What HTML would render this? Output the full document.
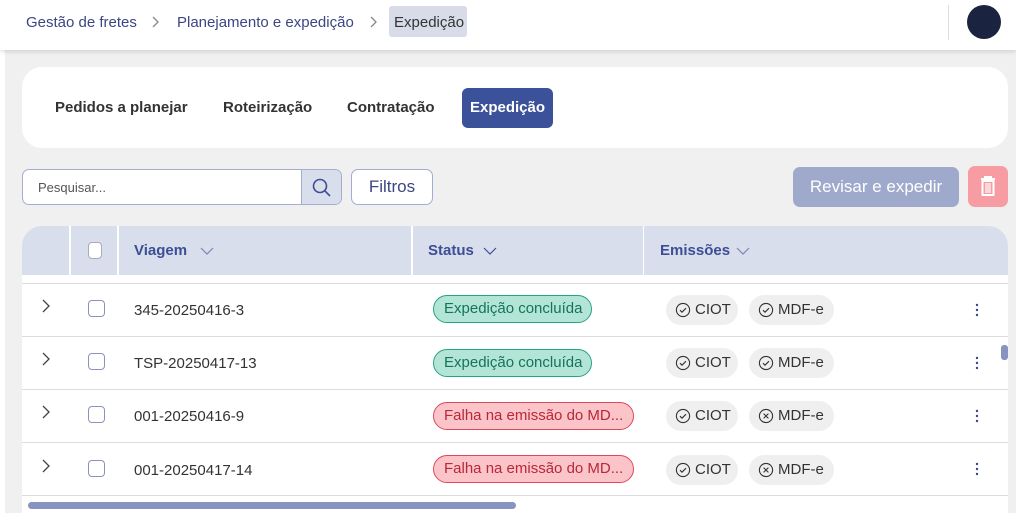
<!DOCTYPE html>
<html><head><meta charset="utf-8"><style>
*{box-sizing:border-box;margin:0;padding:0}
body{width:1016px;height:513px;overflow:hidden;background:#fff;font-family:"Liberation Sans",sans-serif;position:relative;color:#333}
.abs{position:absolute}
.hdr{left:0;top:0;width:1016px;height:50px;background:#fff;box-shadow:0 2px 4px rgba(0,0,0,.12);z-index:2}
.bc{top:14px;font-size:15px;color:#3b4682}
.main{left:5px;top:50px;width:1011px;height:463px;background:#f0f0f0}
.card{left:22px;top:67px;width:986px;height:81px;background:#fff;border-radius:20px}
.tab{top:99px;font-size:15px;font-weight:bold;color:#333}
.th{top:242px;font-size:15px;font-weight:bold;color:#3b4e96}
.cell{font-size:15px;color:#333}
.pill{height:28px;border-radius:14px;font-size:15px;padding:0 10px;line-height:26px;white-space:nowrap}
.g{background:#b3e5d6;border:1px solid #26a383;color:#13745a}
.r{background:#fbc4c9;border:1px solid #e0475a;color:#b8283a}
.chip{height:30px;border-radius:15px;background:#efefef;font-size:15px;line-height:30px;padding:0 0 0 9px;color:#333;display:flex;align-items:center;gap:4px;white-space:nowrap}
.chip svg{flex:none;width:16px;height:16px}
.cb{width:17px;height:17px;border:1px solid #8a93b8;border-radius:4px;background:#fff}
.line{left:22px;width:986px;height:1px;background:#dcdcdc}
</style></head><body>
<svg width="0" height="0" style="position:absolute"><defs>
<symbol id="ok" viewBox="0 0 16 16"><circle cx="8" cy="8" r="6.6" fill="none" stroke="#333" stroke-width="1.1"/><path d="M5 8.2l2 2 4-4" fill="none" stroke="#333" stroke-width="1.1"/></symbol>
<symbol id="no" viewBox="0 0 16 16"><circle cx="8" cy="8" r="6.6" fill="none" stroke="#333" stroke-width="1.1"/><path d="M5.6 5.6l4.8 4.8M10.4 5.6l-4.8 4.8" fill="none" stroke="#333" stroke-width="1.1"/></symbol>
<symbol id="ch" viewBox="0 0 12 16"><path d="M3 2l6 6-6 6" fill="none" stroke="#444" stroke-width="1.3"/></symbol>
<symbol id="dt" viewBox="0 0 4 14"><circle cx="2" cy="2" r="1.2" fill="#3b4682"/><circle cx="2" cy="7" r="1.2" fill="#3b4682"/><circle cx="2" cy="12" r="1.2" fill="#3b4682"/></symbol>
<symbol id="dn" viewBox="0 0 14 8"><path d="M1 1l6 6 6-6" fill="none" stroke="currentColor" stroke-width="1.2"/></symbol>
</defs></svg>
<div class="abs hdr">
 <div class="abs bc" style="left:26px">Gestão de fretes</div>
 <svg class="abs" style="left:151px;top:15px" width="10" height="14"><path d="M2 2l5 5-5 5" fill="none" stroke="#888" stroke-width="1.3"/></svg>
 <div class="abs bc" style="left:177px">Planejamento e expedição</div>
 <svg class="abs" style="left:369px;top:15px" width="10" height="14"><path d="M2 2l5 5-5 5" fill="none" stroke="#888" stroke-width="1.3"/></svg>
 <div class="abs" style="left:389px;top:6px;width:78px;height:31px;background:#d8dce9;border-radius:3px"></div>
 <div class="abs bc" style="left:394px;color:#333">Expedição</div>
 <div class="abs" style="left:948px;top:5px;width:1px;height:35px;background:#ddd"></div>
 <div class="abs" style="left:967px;top:5px;width:34px;height:34px;border-radius:50%;background:#1a2340"></div>
</div>
<div class="abs main"></div>
<div class="abs card"></div>
<div class="abs tab" style="left:55px">Pedidos a planejar</div>
<div class="abs tab" style="left:223px">Roteirização</div>
<div class="abs tab" style="left:347px">Contratação</div>
<div class="abs" style="left:462px;top:88px;width:91px;height:40px;background:#3b5199;border-radius:6px;color:#fff;font-size:15px;font-weight:bold;text-align:center;line-height:40px">Expedição</div>

<div class="abs" style="left:22px;top:169px;width:320px;height:36px;border:1px solid #a4acd0;border-radius:7px;background:#fff;overflow:hidden">
 <div class="abs" style="left:15px;top:10px;font-size:13px;color:#555">Pesquisar...</div>
 <div class="abs" style="left:278px;top:0;width:42px;height:36px;background:#d8deeb;border-left:1px solid #a4acd0"></div>
 <svg class="abs" style="left:288px;top:7px" width="22" height="22" viewBox="0 0 22 22"><circle cx="9" cy="9" r="6.5" fill="none" stroke="#3b4e96" stroke-width="1.6"/><path d="M13.8 13.8L19 19" stroke="#3b4e96" stroke-width="1.6"/></svg>
</div>
<div class="abs" style="left:351px;top:169px;width:82px;height:36px;border:1px solid #a4acd0;border-radius:7px;background:#fff;font-size:17px;color:#3b4682;text-align:center;line-height:34px">Filtros</div>
<div class="abs" style="left:793px;top:167px;width:166px;height:40px;background:#9ea9cc;border-radius:7px;font-size:17px;color:#fff;text-align:center;line-height:40px">Revisar e expedir</div>
<div class="abs" style="left:968px;top:166px;width:40px;height:41px;background:#f89ca3;border-radius:7px"></div>
<svg class="abs" style="left:978px;top:175px" width="20" height="22" viewBox="0 0 20 22"><path d="M3 4h14M7 4V2h6v2" stroke="#fff" stroke-width="2" fill="none"/><rect x="4.5" y="6" width="11" height="14" fill="none" stroke="#fff" stroke-width="2"/><path d="M8 8v10M10 8v10M12 8v10" stroke="#fff" stroke-width="1.2"/></svg>

<div class="abs" style="left:22px;top:226px;width:986px;height:49px;background:#d8deeb;border-radius:20px 20px 0 0"></div>
<div class="abs" style="left:69px;top:226px;width:2px;height:49px;background:#fff"></div>
<div class="abs" style="left:117px;top:226px;width:2px;height:49px;background:#fff"></div>
<div class="abs" style="left:411px;top:226px;width:2px;height:49px;background:#fff"></div>
<div class="abs" style="left:643px;top:226px;width:1px;height:49px;background:#fff"></div>
<div class="abs cb" style="left:88px;top:242px;width:14px;border-color:#aab"></div>
<div class="abs th" style="left:134px">Viagem</div><svg class="abs" style="left:200px;top:247px;color:#7a86b8" width="14" height="8"><use href="#dn"/></svg>
<div class="abs th" style="left:428px">Status</div><svg class="abs" style="left:483px;top:247px;color:#3b4e96" width="14" height="8"><use href="#dn"/></svg>
<div class="abs th" style="left:660px">Emissões</div><svg class="abs" style="left:736px;top:247px;color:#7a86b8" width="14" height="8"><use href="#dn"/></svg>
<div class="abs" style="left:22px;top:275px;width:986px;height:238px;background:#fff"></div>
<div class="abs line" style="top:283px"></div>
<div class="abs line" style="top:336px"></div>
<div class="abs line" style="top:389px"></div>
<div class="abs line" style="top:442px"></div>
<div class="abs line" style="top:495px"></div>

<svg class="abs" style="left:40px;top:298px" width="12" height="16"><use href="#ch"/></svg>
<svg class="abs" style="left:40px;top:351px" width="12" height="16"><use href="#ch"/></svg>
<svg class="abs" style="left:40px;top:404px" width="12" height="16"><use href="#ch"/></svg>
<svg class="abs" style="left:40px;top:458px" width="12" height="16"><use href="#ch"/></svg>
<div class="abs cb" style="left:88px;top:300px"></div>
<div class="abs cb" style="left:88px;top:353px"></div>
<div class="abs cb" style="left:88px;top:406px"></div>
<div class="abs cb" style="left:88px;top:460px"></div>
<div class="abs cell" style="left:134px;top:302px">345-20250416-3</div>
<div class="abs cell" style="left:134px;top:355px">TSP-20250417-13</div>
<div class="abs cell" style="left:134px;top:408px">001-20250416-9</div>
<div class="abs cell" style="left:134px;top:462px">001-20250417-14</div>
<div class="abs pill g" style="left:433px;top:295px;width:159px">Expedição concluída</div>
<div class="abs pill g" style="left:433px;top:349px;width:159px">Expedição concluída</div>
<div class="abs pill r" style="left:433px;top:402px;width:201px">Falha na emissão do MD...</div>
<div class="abs pill r" style="left:433px;top:455px;width:201px">Falha na emissão do MD...</div>

<div class="abs chip" style="left:666px;top:295px;width:72px"><svg><use href="#ok"/></svg>CIOT</div>
<div class="abs chip" style="left:749px;top:295px;width:85px"><svg><use href="#ok"/></svg>MDF-e</div>
<div class="abs chip" style="left:666px;top:348px;width:72px"><svg><use href="#ok"/></svg>CIOT</div>
<div class="abs chip" style="left:749px;top:348px;width:85px"><svg><use href="#ok"/></svg>MDF-e</div>
<div class="abs chip" style="left:666px;top:401px;width:72px"><svg><use href="#ok"/></svg>CIOT</div>
<div class="abs chip" style="left:749px;top:401px;width:85px"><svg><use href="#no"/></svg>MDF-e</div>
<div class="abs chip" style="left:666px;top:455px;width:72px"><svg><use href="#ok"/></svg>CIOT</div>
<div class="abs chip" style="left:749px;top:455px;width:85px"><svg><use href="#no"/></svg>MDF-e</div>

<svg class="abs" style="left:975px;top:303px" width="4" height="14"><use href="#dt"/></svg>
<svg class="abs" style="left:975px;top:356px" width="4" height="14"><use href="#dt"/></svg>
<svg class="abs" style="left:975px;top:409px" width="4" height="14"><use href="#dt"/></svg>
<svg class="abs" style="left:975px;top:462px" width="4" height="14"><use href="#dt"/></svg>

<div class="abs" style="left:1001px;top:345px;width:7px;height:15px;border-radius:3px;background:#8794c0"></div>
<div class="abs" style="left:28px;top:502px;width:488px;height:7px;border-radius:4px;background:#8794c0"></div>
</body></html>
